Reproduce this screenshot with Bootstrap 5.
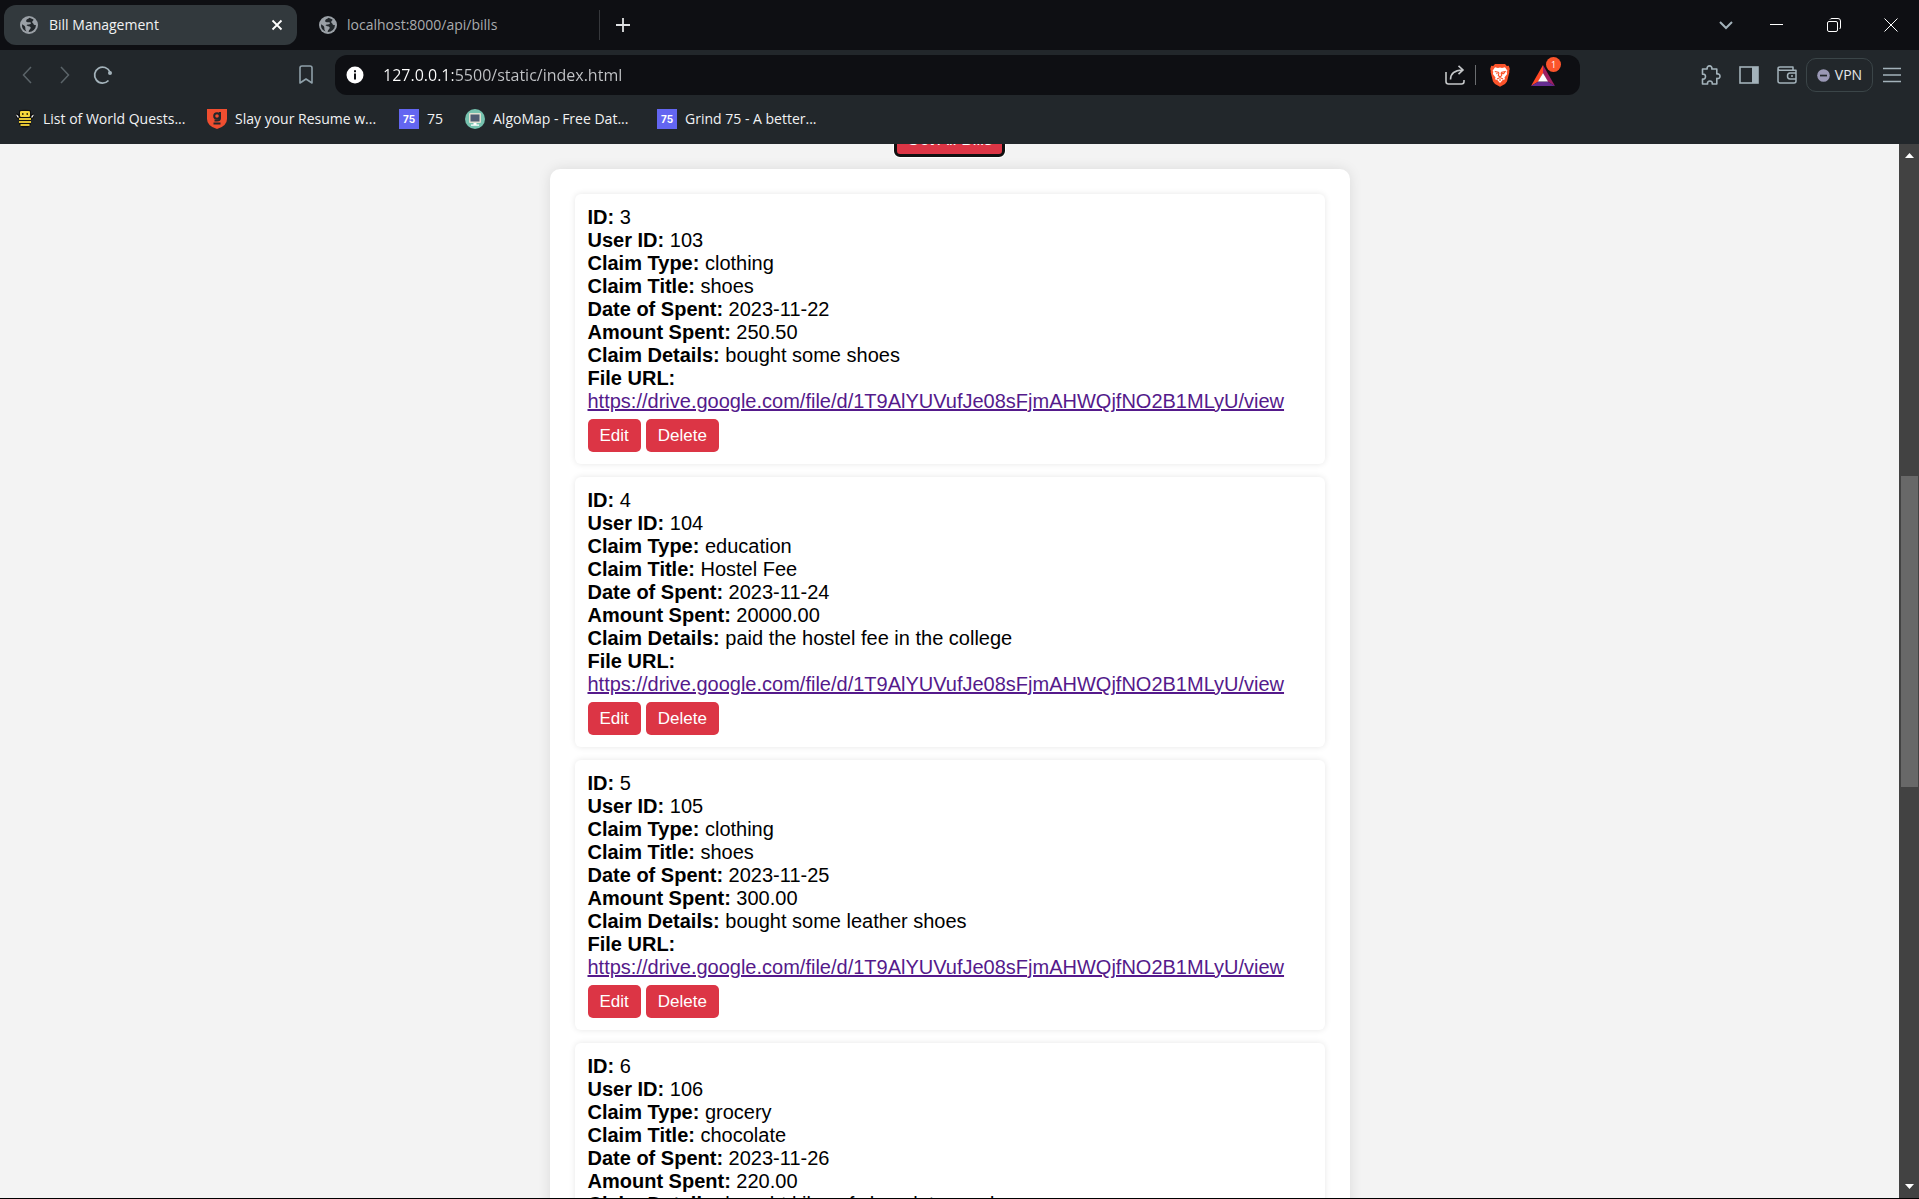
<!DOCTYPE html>
<html lang="en">
<head>
<meta charset="utf-8">
<meta name="viewport" content="width=device-width, initial-scale=1">
<title>Bill Management</title>
<link href="https://cdn.jsdelivr.net/npm/bootstrap@5.3.0/dist/css/bootstrap.min.css" rel="stylesheet">
<style>
  body { font-family: "Liberation Sans", Arial, sans-serif; background: #000; color: #000; }
  .window { padding-bottom: 1px; }
  .chrome-ui { font-family: "Open Sans", "Noto Sans", sans-serif; font-size: 14px; line-height: 20px; color: #f1f2f3; background: #22272b; }
  .chrome-ui svg { display: block; flex: none; }
  .chrome-ui button { background: none; border: 0; padding: 0; color: inherit; display: flex; align-items: center; justify-content: center; }
  .tabstrip { background: #0e0f13; height: 50px; padding-left: 4px; }
  .tab-item { width: 293px; height: 40px; border-radius: 12px; padding: 0 12px 0 16px; gap: 11px; color: #a9abae; text-decoration: none; }
  .tab-item.current { background: #32393d; color: #f1f2f3; }
  .tab-item.idle { width: 298px; padding-left: 22px; gap: 10px; }
  .tab-rule { width: 1px; height: 30px; background: #36383c; }
  .chrome-ui .win-btn { width: 57px; height: 50px; }
  .chrome-ui .win-btn.narrow { width: 45px; }
  .toolbar { height: 50px; color: #a3b2ba; }
  .chrome-ui .nav-btn { width: 38px; height: 40px; }
  .chrome-ui .bookmark-btn { margin-left: 165px; margin-right: 10px; }
  .omnibox { background: #0e0f13; border-radius: 12px; height: 40px; padding: 0 25px 0 11px; margin-right: 112px; gap: 19px; min-width: 0; }
  .url-input { border: 0; outline: 0; padding: 0; min-width: 0; font-size: 16px; color: #c3c5c8; -webkit-text-fill-color: transparent; background: linear-gradient(to right, #fff 70px, #c3c5c8 70px); -webkit-background-clip: text; background-clip: text; }
  .tool-rule { width: 1px; height: 20px; background: #6b6d70; margin: 0 14px 0 10px; }
  .chrome-ui .rewards { position: relative; margin-left: 21px; }
  .reward-count { position: absolute; top: -8px; right: -6px; width: 15px; height: 15px; border-radius: 50%; background: #fb542b; color: #fff; font-size: 9px; line-height: 15px; text-align: center; }
  .chrome-ui .vpn-btn { border: 1px solid #3b4548; border-radius: 10px; width: 67px; height: 34px; gap: 5px; color: #e6e8ea; }
  .bookmarks { height: 44px; padding: 0 15px 6px; gap: 22px; }
  .bookmarks a { color: inherit; text-decoration: none; gap: 8px; white-space: nowrap; }
  .bookmarks .full { width: 170px; }
  .tile-75 { width: 20px; height: 20px; background: #6366f1; color: #fff; font: 700 10px/20px Inter, sans-serif; text-align: center; }
  .page-view { background: #f3f3f3; min-height: 0; }
  .scroll-body { min-width: 0; }
  .top-action { margin-top: -21px; }
  .red-btn { background: #dc3545; color: #fff; border: 0; border-radius: 5px; height: 33px; padding: 0 12px; font-size: 17px; line-height: 20px; }
  .red-btn.is-focused { outline: 3px solid #101010; outline-offset: -2px; box-shadow: 0 0 0 2px #fff; }
  .bill-panel { width: 800px; max-width: 100%; margin: 13px auto 0; padding: 25px; background: #fff; border-radius: 10px; box-shadow: 0 0 13px rgba(0,0,0,.1); }
  .bill-list { gap: 13px; }
  .bill-item { padding: 12px 13px; border-radius: 6px; box-shadow: 0 0 6px rgba(0,0,0,.1); font-size: 20px; line-height: 23px; }
  .bill-item a { color: #551a8b; }
  .bill-actions { gap: 5px; margin-top: 6px; }
  .scroll-track { width: 20px; background: #424242; padding: 8px 1px 8px 2px; }
  .scroll-thumb { width: 100%; flex: 0 0 30%; background: #686868; }
  .gap-before { flex: 4 1 0; }
  .gap-after { flex: 5 1 0; }
</style>
<script src="https://cdn.jsdelivr.net/npm/bootstrap@5.3.0/dist/js/bootstrap.bundle.min.js"></script>
</head>
<body>
<svg width="0" height="0" class="position-absolute" aria-hidden="true">
  <symbol id="globe" viewBox="0 0 18 18"><circle cx="9" cy="9" r="9" fill="#9aa0a6"/><path d="M9.500 1.800c-1 1.300-2.800 1-3.300 2.700-.3 1 .5 1.700 1.500 1.700h2.400c1 0 1 1.300.4 1.700-.9.600-2.500.3-3.300.8C5.800 9.600 7.500 10 8.700 10.300c1.500.4 2.500 1 1.800 2.300-.7 1.200-1.800 1.500-1.800 3.300A7 7 0 0 0 16 9c-1.500.4-2.200-.2-2.500-1-.3-1-1.500-1-1.300-2.200.2-1 1.400-1.200 1.300-2.300zM2 8.300c1 1 2.300 1 3 2.200.7 1.300 0 2.700.8 3.800l.7 1.200A7 7 0 0 1 2 8.300z" fill="#22272b"/></symbol>
</svg>
<div class="window vh-100 d-flex flex-column overflow-hidden">
  <header class="chrome-ui flex-shrink-0">
    <div class="tabstrip d-flex align-items-center">
      <a href="#" class="tab-item current d-flex align-items-center">
        <svg width="18" height="18"><use href="#globe"/></svg>
        <span class="flex-grow-1">Bill Management</span>
        <svg width="16" height="16" viewBox="0 0 16 16" stroke="#fff" stroke-width="1.800"><path d="M3.500 3.500l9 9M12.500 3.500l-9 9"/></svg>
      </a>
      <a href="#" class="tab-item idle d-flex align-items-center">
        <svg width="18" height="18"><use href="#globe"/></svg>
        <span>localhost:8000/api/bills</span>
      </a>
      <span class="tab-rule ms-1"></span>
      <button class="ms-3" aria-label="New tab"><svg width="14" height="14" viewBox="0 0 14 14" stroke="#dfe1e3" stroke-width="1.800"><path d="M7 0v14M0 7h14"/></svg></button>
      <div class="d-flex ms-auto">
        <button class="win-btn narrow" aria-label="Search tabs"><svg width="14" height="14" viewBox="0 0 14 14" fill="none" stroke="#a3b2ba" stroke-width="2"><path d="M1 4l6 6 6-6"/></svg></button>
        <button class="win-btn" aria-label="Minimize"><svg width="14" height="14" viewBox="0 0 14 14" stroke="#fff"><path d="M0 6.500h13"/></svg></button>
        <button class="win-btn" aria-label="Restore"><svg width="14" height="14" viewBox="0 0 14 14" fill="none" stroke="#fff"><rect x=".5" y="3.500" width="10" height="10" rx="1.500"/><path d="M3 1.500Q3.500.5 5 .5h6q2.500 0 2.500 2.500v6q0 1.500-1 2"/></svg></button>
        <button class="win-btn" aria-label="Close"><svg width="14" height="14" viewBox="0 0 14 14" stroke="#fff"><path d="M.5.5l13 13M13.500.5l-13 13"/></svg></button>
      </div>
    </div>
    <div class="toolbar d-flex align-items-center">
      <div class="d-flex ps-2">
        <button class="nav-btn" aria-label="Back"><svg width="10" height="18" viewBox="0 0 10 18" fill="none" stroke="#5b6469" stroke-width="1.500"><path d="M9 1L1.500 9 9 17"/></svg></button>
        <button class="nav-btn" aria-label="Forward"><svg width="10" height="18" viewBox="0 0 10 18" fill="none" stroke="#5b6469" stroke-width="1.500"><path d="M1 1l7.500 8L1 17"/></svg></button>
        <button class="nav-btn" aria-label="Reload"><svg width="20" height="20" viewBox="0 0 20 20" fill="none" stroke="#a3b2ba" stroke-width="1.800"><path d="M15.500 15.500A8 8 0 1 1 17 7"/><circle cx="17" cy="8" r="2" fill="#a3b2ba" stroke="none"/></svg></button>
      </div>
      <button class="nav-btn bookmark-btn" aria-label="Bookmark this page"><svg width="14" height="20" viewBox="0 0 14 20" fill="none" stroke="#8fa0a9" stroke-width="1.600" stroke-linejoin="round"><path d="M1 3q0-2 2-2h8q2 0 2 2v15l-6-4-6 4z"/></svg></button>
      <div class="omnibox d-flex align-items-center flex-grow-1">
        <svg width="18" height="18" viewBox="0 0 18 18"><circle cx="9" cy="9" r="8.500" fill="#fff"/><path d="M8 7.500h2v6H8zM8 4.300h2v2H8z" fill="#0e0f13"/></svg>
        <input class="url-input flex-grow-1" type="text" aria-label="Address" value="127.0.0.1:5500/static/index.html">
        <div class="d-flex align-items-center">
        <button aria-label="Share"><svg width="20" height="20" viewBox="0 0 20 20" fill="none" stroke="#c5c7c9" stroke-width="1.600"><path d="M1 7v9.500Q1 19 3.500 19h13q2.500 0 2.500-2.500V15M5.500 14.500q0-9 12-9.500M13.500.8L18 5l-4.500 4.200"/></svg></button>
        <span class="tool-rule"></span>
        <button aria-label="Shields"><svg width="20" height="24" viewBox="0 0 20 24"><path d="M5 1h10l1.800 2 2-.2L19.800 6l-.6 2 .2 1-2.400 9.500-2 2.500-5 2.800L5 21l-2-2.500L.6 9l.2-1L.2 6l1-3.200 2 .2z" fill="#fb542b"/><path d="M10 4.500l2 .5 3-.8 2.400 3.600-.7 1 .4 2.200-2.600 3.500.5 1.800-2.300.7L10 20l-2.700-3-2.300-.7.500-1.800L2.900 11l.4-2.200-.7-1L5 4.200 8 5z" fill="#fff"/><path d="M4.800 8.500l3.500.7.600.8-.6 2.500L10 14l1.700-1.500L11.100 10l.6-.8 3.500-.7-1.500 2.200-1.200-.3-.8.200M6.300 10.700l1.200-.3M7 16l3-1.500L13 16M10 16v2" fill="none" stroke="#fb542b" stroke-width="1.100"/></svg></button>
        <button class="rewards" aria-label="Rewards"><svg width="24" height="21" viewBox="0 0 24 21"><path d="M12 0L0 21l7.500-4.500L12 8z" fill="#ff4724"/><path d="M12 0l12 21-7.500-4.500L12 8z" fill="#9e1f63"/><path d="M0 21h24l-7.500-4.500h-9z" fill="#662d91"/><path d="M12 8l5 8.500H7z" fill="#fff"/></svg><span class="reward-count">1</span></button>
        </div>
      </div>
      <div class="d-flex align-items-center pe-2">
        <button class="nav-btn" aria-label="Extensions"><svg width="20" height="20" viewBox="0 0 20 20" fill="none" stroke="#a3b2ba" stroke-width="1.600" stroke-linejoin="round"><path d="M1.500 4h4.700C5.700 2 7 .9 8.500.9S11.300 2 10.800 4h5v5c2-.5 3.200.7 3.200 2.200s-1.200 2.700-3.200 2.200V19h-4.600c.5-2-.8-3-2.300-3s-2.800 1-2.300 3H1.500v-4.900c2 .3 3-.9 3-2.500s-1-2.700-3-2.400z"/></svg></button>
        <button class="nav-btn" aria-label="Sidebar"><svg width="20" height="18" viewBox="0 0 20 18"><rect x="1" y="1" width="18" height="16" fill="none" stroke="#a3b2ba" stroke-width="1.600"/><path d="M13 1h6v16h-6z" fill="#a3b2ba"/></svg></button>
        <button class="nav-btn" aria-label="Wallet"><svg width="20" height="18" viewBox="0 0 20 18" fill="none" stroke="#a3b2ba" stroke-width="1.500" stroke-linejoin="round"><path d="M19 6.500V4.300H3Q1 4.300 1 2.600 1 1 3 1h13v3M1 3v12q0 2 2 2h14q2 0 2-2v-1.500M19 7h-6q-2.500 0-2.500 3t2.500 3h6zM14 10h2"/></svg></button>
        <button class="vpn-btn"><svg width="13" height="13" viewBox="0 0 13 13"><circle cx="6.500" cy="6.500" r="6.300" fill="#9a98b5"/><path d="M3 5.700h7v1.700H3z" fill="#22272b"/></svg>VPN</button>
        <button class="nav-btn" aria-label="Menu"><svg width="18" height="16" viewBox="0 0 18 16" stroke="#a3b2ba" stroke-width="1.600"><path d="M0 1.500h18M0 8h18M0 14.500h18"/></svg></button>
      </div>
    </div>
    <nav class="bookmarks d-flex align-items-center" aria-label="Bookmarks">
      <a href="#" class="full d-flex align-items-center">
        <svg width="20" height="20" viewBox="0 0 20 20"><path d="M4 2Q4 .8 10 .8T16 2v3l3-.5v4l-3 2.500v4.500l-3 3H7l-3-3V11L1 8.500v-4L4 5z" fill="#111"/><path d="M5 3q0-1 1.500-1h7Q15 2 15 3v4q0 1-1.500 1h-7Q5 8 5 7z" fill="#f5d63c"/><path d="M7 4h1.500v2H7zM11.500 4H13v2h-1.500z" fill="#473c0d"/><path d="M4 9h12v2H4zM4 12h12v2H4zM5.500 15h9v2h-9z" fill="#e3c535"/><path d="M1 5.500l2 1 1 2H2.500zM19 5.500l-2 1-1 2h1.500z" fill="#eef0f2"/></svg>
        List of World Quests...</a>
      <a href="#" class="full d-flex align-items-center">
        <svg width="20" height="20" viewBox="0 0 20 20"><path d="M0 0h20v10q0 7-10 10Q0 17 0 10z" fill="#f04e30"/><g fill="none" stroke="#22272b" stroke-width="2"><circle cx="10" cy="7" r="2.800"/><path d="M13 3v6q0 2.500-3 2.500H7.500M6.500 14.500h7"/></g></svg>
        Slay your Resume w...</a>
      <a href="#" class="d-flex align-items-center"><span class="tile-75">75</span>75</a>
      <a href="#" class="full d-flex align-items-center">
        <svg width="20" height="20" viewBox="0 0 20 20"><circle cx="10" cy="10" r="10" fill="#76c2af"/><rect x="4" y="4" width="12" height="10" rx="1" fill="#e0e0d1"/><path d="M5.500 5.500h9v7h-9z" fill="#4f5d73"/><path d="M8.500 14h3v1.500H14v1.200H6v-1.200h2.500z" fill="#fff"/></svg>
        AlgoMap - Free Dat...</a>
      <a href="#" class="full d-flex align-items-center"><span class="tile-75">75</span>Grind 75 - A better...</a>
    </nav>
  </header>
  <div class="page-view d-flex flex-grow-1 overflow-hidden">
    <main class="scroll-body flex-grow-1 overflow-hidden">
      <div class="top-action d-flex justify-content-center"><button class="red-btn is-focused">Get All Bills</button></div>
      <section class="bill-panel">
        <div class="bill-list d-flex flex-column">
          <article class="bill-item">
            <div><strong>ID:</strong> 3</div>
            <div><strong>User ID:</strong> 103</div>
            <div><strong>Claim Type:</strong> clothing</div>
            <div><strong>Claim Title:</strong> shoes</div>
            <div><strong>Date of Spent:</strong> 2023-11-22</div>
            <div><strong>Amount Spent:</strong> 250.50</div>
            <div><strong>Claim Details:</strong> bought some shoes</div>
            <div><strong>File URL:</strong></div>
            <a href="#">https://drive.google.com/file/d/1T9AlYUVufJe08sFjmAHWQjfNO2B1MLyU/view</a>
            <div class="bill-actions d-flex"><button class="red-btn">Edit</button><button class="red-btn">Delete</button></div>
          </article>
          <article class="bill-item">
            <div><strong>ID:</strong> 4</div>
            <div><strong>User ID:</strong> 104</div>
            <div><strong>Claim Type:</strong> education</div>
            <div><strong>Claim Title:</strong> Hostel Fee</div>
            <div><strong>Date of Spent:</strong> 2023-11-24</div>
            <div><strong>Amount Spent:</strong> 20000.00</div>
            <div><strong>Claim Details:</strong> paid the hostel fee in the college</div>
            <div><strong>File URL:</strong></div>
            <a href="#">https://drive.google.com/file/d/1T9AlYUVufJe08sFjmAHWQjfNO2B1MLyU/view</a>
            <div class="bill-actions d-flex"><button class="red-btn">Edit</button><button class="red-btn">Delete</button></div>
          </article>
          <article class="bill-item">
            <div><strong>ID:</strong> 5</div>
            <div><strong>User ID:</strong> 105</div>
            <div><strong>Claim Type:</strong> clothing</div>
            <div><strong>Claim Title:</strong> shoes</div>
            <div><strong>Date of Spent:</strong> 2023-11-25</div>
            <div><strong>Amount Spent:</strong> 300.00</div>
            <div><strong>Claim Details:</strong> bought some leather shoes</div>
            <div><strong>File URL:</strong></div>
            <a href="#">https://drive.google.com/file/d/1T9AlYUVufJe08sFjmAHWQjfNO2B1MLyU/view</a>
            <div class="bill-actions d-flex"><button class="red-btn">Edit</button><button class="red-btn">Delete</button></div>
          </article>
          <article class="bill-item">
            <div><strong>ID:</strong> 6</div>
            <div><strong>User ID:</strong> 106</div>
            <div><strong>Claim Type:</strong> grocery</div>
            <div><strong>Claim Title:</strong> chocolate</div>
            <div><strong>Date of Spent:</strong> 2023-11-26</div>
            <div><strong>Amount Spent:</strong> 220.00</div>
            <div><strong>Claim Details:</strong> bought kilos of chocolates and</div>
          </article>
        </div>
      </section>
    </main>
    <div class="scroll-track d-flex flex-column align-items-center" aria-hidden="true">
      <svg width="9" height="7" viewBox="0 0 9 7"><path d="M0 6l4.500-5L9 6z" fill="#fff"/></svg>
      <div class="gap-before"></div>
      <div class="scroll-thumb"></div>
      <div class="gap-after"></div>
      <svg width="9" height="7" viewBox="0 0 9 7"><path d="M0 1l4.500 5L9 1z" fill="#fff"/></svg>
    </div>
  </div>
</div>
</body>
</html>
